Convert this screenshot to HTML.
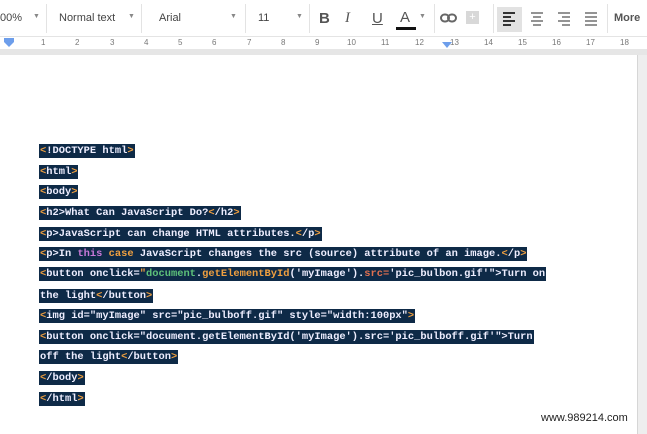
<!DOCTYPE html>
<html><head><style>
*{margin:0;padding:0;box-sizing:border-box}
body{width:647px;height:434px;overflow:hidden;background:#eeeeee;font-family:"Liberation Sans",Arial,sans-serif;position:relative}
.tb{position:absolute;left:0;top:0;width:647px;height:37px;background:#fff;border-bottom:1px solid #e4e4e4}
.t{position:absolute;top:12px;font-size:11px;color:#444}
.sep{position:absolute;top:4px;width:1px;height:29px;background:#e3e3e3}
.ar{position:absolute;top:13px;font-size:7px;color:#888}
.ruler{position:absolute;left:0;top:37px;width:647px;height:12px;background:#fff;font-size:8px;color:#777}
.ruler span{position:absolute;top:1px}
.gap{position:absolute;left:0;top:49px;width:647px;height:6px;background:#e6e6e6}
.page{position:absolute;left:0;top:55px;width:638px;height:379px;background:#fff;border-right:1px solid #d6d6d6}
.code{position:absolute;left:39px;font-family:"Liberation Mono",monospace;font-size:10.4px;font-weight:bold;letter-spacing:0;line-height:13px}
.code span.l{background:#0e2a47;color:#eef;padding:1px 1px;white-space:pre}
.o{color:#f0a040}.p{color:#c878d8}.g{color:#5ec27a}.r{color:#e07050}
.wm{position:absolute;left:541px;top:412px;font-size:11px;color:#222}
</style></head><body>
<div class="tb">
<div class="t" style="left:0">00%</div><div class="ar" style="left:33px">▼</div>
<div class="sep" style="left:46px"></div>
<div class="t" style="left:59px">Normal text</div><div class="ar" style="left:128px">▼</div>
<div class="sep" style="left:141px"></div>
<div class="t" style="left:159px">Arial</div><div class="ar" style="left:230px">▼</div>
<div class="sep" style="left:245px"></div>
<div class="t" style="left:258px">11</div><div class="ar" style="left:296px">▼</div>
<div class="sep" style="left:309px"></div>
<div class="t" style="left:319px;top:10px;font-size:15px;font-weight:bold;color:#555">B</div>
<div class="t" style="left:345px;top:10px;font-size:15px;font-style:italic;color:#555;font-family:'Liberation Serif',serif">I</div>
<div class="t" style="left:372px;top:10px;font-size:15px;text-decoration:underline;color:#555">U</div>
<div class="t" style="left:400px;top:9px;font-size:15px;color:#555">A</div>
<div style="position:absolute;left:396px;top:27px;width:20px;height:3px;background:#111"></div>
<div class="ar" style="left:419px">▼</div>
<div class="sep" style="left:434px"></div>
<svg style="position:absolute;left:440px;top:13px" width="18" height="10"><rect x="1" y="1.5" width="8" height="7" rx="3.5" fill="none" stroke="#666" stroke-width="2"/><rect x="8" y="1.5" width="8" height="7" rx="3.5" fill="none" stroke="#666" stroke-width="2"/></svg>
<div style="position:absolute;left:466px;top:11px;width:13px;height:13px;background:#d8d8d8;color:#fff;font-size:11px;text-align:center;line-height:13px">+</div>
<div class="sep" style="left:493px"></div>
<div style="position:absolute;left:497px;top:7px;width:25px;height:25px;background:#e2e2e2"></div>
<svg style="position:absolute;left:503px;top:12px" width="100" height="14">
<g stroke="#333" stroke-width="2"><line x1="0" y1="1" x2="12" y2="1"/><line x1="0" y1="5" x2="8" y2="5"/><line x1="0" y1="9" x2="12" y2="9"/><line x1="0" y1="13" x2="8" y2="13"/></g>
<g stroke="#666" stroke-width="1.4"><line x1="28" y1="1" x2="40" y2="1"/><line x1="30" y1="5" x2="38" y2="5"/><line x1="28" y1="9" x2="40" y2="9"/><line x1="30" y1="13" x2="38" y2="13"/>
<line x1="55" y1="1" x2="67" y2="1"/><line x1="59" y1="5" x2="67" y2="5"/><line x1="55" y1="9" x2="67" y2="9"/><line x1="59" y1="13" x2="67" y2="13"/>
<line x1="82" y1="1" x2="94" y2="1"/><line x1="82" y1="5" x2="94" y2="5"/><line x1="82" y1="9" x2="94" y2="9"/><line x1="82" y1="13" x2="94" y2="13"/></g></svg>
<div class="sep" style="left:607px"></div>
<div class="t" style="left:614px;font-weight:bold;color:#555">More</div>
</div>
<div class="ruler">
<svg style="position:absolute;left:4px;top:1px" width="10" height="9"><path d="M0 0h10v4l-5 5-5-5z" fill="#6d9eeb"/></svg>
<svg style="position:absolute;left:442px;top:1px" width="10" height="10"><path d="M0 4h10l-5 6z" fill="#6d9eeb"/></svg>
<span style="left:41px">1</span><span style="left:75px">2</span><span style="left:110px">3</span><span style="left:144px">4</span><span style="left:178px">5</span><span style="left:212px">6</span><span style="left:247px">7</span><span style="left:281px">8</span><span style="left:315px">9</span><span style="left:347px">10</span><span style="left:381px">11</span><span style="left:415px">12</span><span style="left:450px">13</span><span style="left:484px">14</span><span style="left:518px">15</span><span style="left:552px">16</span><span style="left:586px">17</span><span style="left:620px">18</span>
</div>
<div class="gap"></div>
<div class="page"></div>
<div class="code" style="top:145px"><span class="l"><span class="o">&lt;</span>!DOCTYPE html<span class="o">&gt;</span></span></div>
<div class="code" style="top:166px"><span class="l"><span class="o">&lt;</span>html<span class="o">&gt;</span></span></div>
<div class="code" style="top:186px"><span class="l"><span class="o">&lt;</span>body<span class="o">&gt;</span></span></div>
<div class="code" style="top:207px"><span class="l"><span class="o">&lt;</span>h2&gt;What Can JavaScript Do?<span class="o">&lt;</span>/h2<span class="o">&gt;</span></span></div>
<div class="code" style="top:228px"><span class="l"><span class="o">&lt;</span>p&gt;JavaScript can change HTML attributes.<span class="o">&lt;</span>/p<span class="o">&gt;</span></span></div>
<div class="code" style="top:248px"><span class="l"><span class="o">&lt;</span>p&gt;In <span class="p">this</span> <span class="o">case</span> JavaScript changes the src (source) attribute of an image.<span class="o">&lt;</span>/p<span class="o">&gt;</span></span></div>
<div class="code" style="top:268px"><span class="l"><span class="o">&lt;</span>button onclick=<span class="o">"</span><span class="g">document</span>.<span class="o">getElementById</span>('myImage').<span class="r">src=</span>'pic_bulbon.gif'"&gt;Turn on</span></div>
<div class="code" style="top:290px"><span class="l">the light<span class="o">&lt;</span>/button<span class="o">&gt;</span></span></div>
<div class="code" style="top:310px"><span class="l"><span class="o">&lt;</span>img id="myImage" src="pic_bulboff.gif" style="width:100px"<span class="o">&gt;</span></span></div>
<div class="code" style="top:331px"><span class="l"><span class="o">&lt;</span>button onclick="document.getElementById('myImage').src='pic_bulboff.gif'"&gt;Turn</span></div>
<div class="code" style="top:351px"><span class="l">off the light<span class="o">&lt;</span>/button<span class="o">&gt;</span></span></div>
<div class="code" style="top:372px"><span class="l"><span class="o">&lt;</span>/body<span class="o">&gt;</span></span></div>
<div class="code" style="top:393px"><span class="l"><span class="o">&lt;</span>/html<span class="o">&gt;</span></span></div>
<div class="wm">www.989214.com</div>
</body></html>
